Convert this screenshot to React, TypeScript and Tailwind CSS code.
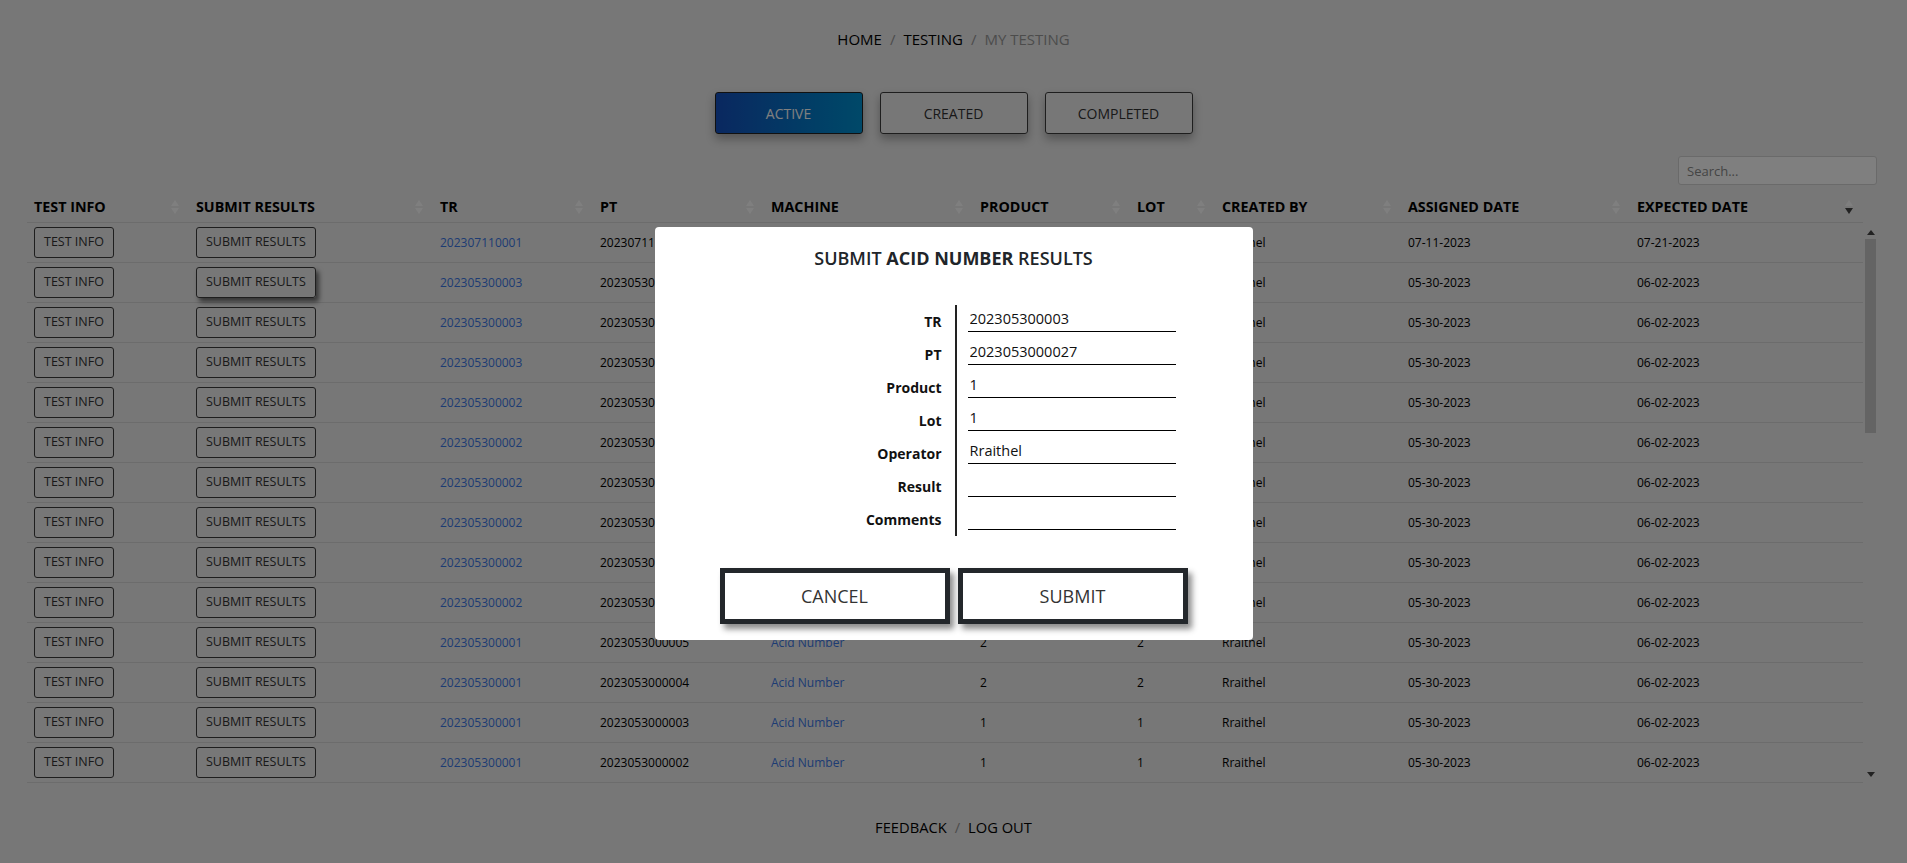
import React from 'react';

interface Column {
	label: string;
	width: string;
	sorted?: boolean;
}

interface TestRow {
	tr: string;
	pt: string;
	machine: string;
	product: string;
	lot: string;
	createdBy: string;
	assigned: string;
	expected: string;
}

const columns: Column[] = [
	{ label: 'TEST INFO', width: 'w-[162px]' },
	{ label: 'SUBMIT RESULTS', width: 'w-[244px]' },
	{ label: 'TR', width: 'w-[160px]' },
	{ label: 'PT', width: 'w-[171px]' },
	{ label: 'MACHINE', width: 'w-[209px]' },
	{ label: 'PRODUCT', width: 'w-[157px]' },
	{ label: 'LOT', width: 'w-[85px]' },
	{ label: 'CREATED BY', width: 'w-[186px]' },
	{ label: 'ASSIGNED DATE', width: 'w-[229px]' },
	{ label: 'EXPECTED DATE', width: 'w-[233px]', sorted: true },
];

const makeRow = (tr: string, pt: string, product: string, lot: string, assigned = '05-30-2023', expected = '06-02-2023'): TestRow => ({
	tr,
	pt,
	machine: 'Acid Number',
	product,
	lot,
	createdBy: 'Rraithel',
	assigned,
	expected,
});

const rows: TestRow[] = [
	makeRow('202307110001', '2023071100001', '1', '1', '07-11-2023', '07-21-2023'),
	makeRow('202305300003', '2023053000027', '1', '1'),
	makeRow('202305300003', '2023053000026', '1', '1'),
	makeRow('202305300003', '2023053000025', '1', '1'),
	makeRow('202305300002', '2023053000011', '2', '2'),
	makeRow('202305300002', '2023053000010', '2', '2'),
	makeRow('202305300002', '2023053000009', '2', '2'),
	makeRow('202305300002', '2023053000008', '2', '2'),
	makeRow('202305300002', '2023053000007', '2', '2'),
	makeRow('202305300002', '2023053000006', '2', '2'),
	makeRow('202305300001', '2023053000005', '2', '2'),
	makeRow('202305300001', '2023053000004', '2', '2'),
	makeRow('202305300001', '2023053000003', '1', '1'),
	makeRow('202305300001', '2023053000002', '1', '1'),
];

const formFields = [
	{ label: 'TR', value: '202305300003' },
	{ label: 'PT', value: '2023053000027' },
	{ label: 'Product', value: '1' },
	{ label: 'Lot', value: '1' },
	{ label: 'Operator', value: 'Rraithel' },
	{ label: 'Result', value: '' },
	{ label: 'Comments', value: '' },
];

function SortIcon({ sorted }: { sorted?: boolean }) {
	return (
		<svg width="8" height="14" viewBox="0 0 8 14" className="shrink-0">
			<path d="M4 0 L8 6 L0 6 Z" fill="#ffffff" />
			<path d="M0 8 L8 8 L4 14 Z" fill={sorted ? '#444444' : '#ffffff'} />
		</svg>
	);
}

function OutlineButton({ label, hovered }: { label: string; hovered?: boolean }) {
	return (
		<button
			className={`h-[31px] px-[9px] border border-[#3c3c3c] rounded-[3px] text-[12.5px] text-[#333] leading-none ${
				hovered ? 'shadow-[3px_4px_5px_rgba(0,0,0,0.55)]' : ''
			}`}>
			{label}
		</button>
	);
}

export default function App() {
	return (
		<div className="relative min-h-screen bg-[#eeeeee] font-['Open_Sans','Noto_Sans',sans-serif] text-black">
			<div className="flex flex-col items-center pt-[29px]">
				<nav className="flex items-center text-[15px] leading-[20px]">
					<span>HOME</span>
					<span className="px-[8px] text-[#999]">/</span>
					<span>TESTING</span>
					<span className="px-[8px] text-[#999]">/</span>
					<span className="text-[#999]">MY TESTING</span>
				</nav>

				<div className="mt-[43px] flex gap-[17px]">
					<button className="w-[148px] h-[42px] rounded-[3px] border border-[#222] bg-linear-to-r from-[#1450c0] to-[#0092d2] text-white text-[14px] shadow-[0_5px_10px_rgba(0,0,0,0.3)]">
						ACTIVE
					</button>
					<button className="w-[148px] h-[42px] rounded-[3px] border border-[#3c3c3c] text-[14px] text-[#333] shadow-[0_5px_10px_rgba(0,0,0,0.3)]">
						CREATED
					</button>
					<button className="w-[148px] h-[42px] rounded-[3px] border border-[#3c3c3c] text-[14px] text-[#333] shadow-[0_5px_10px_rgba(0,0,0,0.3)]">
						COMPLETED
					</button>
				</div>
			</div>

			<div className="ml-[27px] w-[1851px]">
				<div className="mt-[22px] flex justify-end pr-[1px]">
					<input
						placeholder="Search..."
						className="w-[199px] h-[29px] rounded-[3px] border border-[#d4d4d4] bg-white px-[8px] text-[13px] placeholder:text-[#8a8a8a] outline-none"
					/>
				</div>

				<div className="mt-[2px] flex w-[1836px] h-[36px] pt-[5px] border-b border-[#d8d8d8]">
					{columns.map((col) => (
						<div key={col.label} className={`${col.width} flex items-center justify-between pl-[7px] pr-[10px]`}>
							<span className="text-[14.3px] font-bold leading-[18px]">{col.label}</span>
							<SortIcon sorted={col.sorted} />
						</div>
					))}
				</div>

				<div className="flex">
					<div className="w-[1836px] h-[560px] overflow-hidden">
						{rows.map((row, i) => (
							<div key={i} className="flex h-[40px] items-center border-b border-[#d8d8d8] text-[12px]">
								<div className="w-[162px] pl-[7px]">
									<OutlineButton label="TEST INFO" />
								</div>
								<div className="w-[244px] pl-[7px]">
									<OutlineButton label="SUBMIT RESULTS" hovered={i === 1} />
								</div>
								<div className="w-[160px] pl-[7px] text-[#3b78e7]">{row.tr}</div>
								<div className="w-[171px] pl-[7px]">{row.pt}</div>
								<div className="w-[209px] pl-[7px] text-[#3b78e7]">{row.machine}</div>
								<div className="w-[157px] pl-[7px]">{row.product}</div>
								<div className="w-[85px] pl-[7px]">{row.lot}</div>
								<div className="w-[186px] pl-[7px]">{row.createdBy}</div>
								<div className="w-[229px] pl-[7px]">{row.assigned}</div>
								<div className="w-[233px] pl-[7px]">{row.expected}</div>
							</div>
						))}
					</div>

					<div className="w-[15px] h-[560px] flex flex-col items-center">
						<svg width="8" height="5" viewBox="0 0 8 5" className="mt-[7px]">
							<path d="M4 0 L8 5 L0 5 Z" fill="#444" />
						</svg>
						<div className="mt-[4px] w-[11px] h-[194px] bg-[#c8c8c8]" />
						<div className="flex-1" />
						<svg width="8" height="5" viewBox="0 0 8 5" className="mb-[6px]">
							<path d="M0 0 L8 0 L4 5 Z" fill="#444" />
						</svg>
					</div>
				</div>
			</div>

			<footer className="mt-[34px] flex justify-center text-[14.7px] leading-[20px] pb-[26px]">
				<span>FEEDBACK</span>
				<span className="px-[8px] text-[#999]">/</span>
				<span>LOG OUT</span>
			</footer>

			<div className="fixed inset-0 bg-black/50" />

			<div className="fixed inset-0 flex justify-center pt-[227px]">
				<div className="w-[598px] h-[413px] rounded-[4px] bg-white flex flex-col items-center pt-[19px]">
					<h2 className="text-[18px] leading-[24px] font-semibold text-[#212529]">
						SUBMIT <span className="font-bold">ACID NUMBER</span> RESULTS
					</h2>

					<div className="mt-[35px] flex w-full">
						<div className="w-[300px] pr-[13px] flex flex-col items-end">
							{formFields.map((f) => (
								<div key={f.label} className="h-[33px] pt-[7px] text-[14px] font-bold leading-[20px] text-[#111]">
									{f.label}
								</div>
							))}
						</div>
						<div className="border-l-2 border-[#222] pl-[11px]">
							{formFields.map((f) => (
								<div key={f.label} className="h-[33px]">
									<input
										defaultValue={f.value}
										className="w-[208px] h-[27px] border-b border-black px-[2px] text-[14.5px] text-[#111] outline-none"
									/>
								</div>
							))}
						</div>
					</div>

					<div className="mt-[32px] flex gap-[8px]">
						<button className="w-[230px] h-[56px] border-[5px] border-[#23272b] bg-white text-[18px] text-[#333] shadow-[4px_5px_6px_rgba(0,0,0,0.45)]">
							CANCEL
						</button>
						<button className="w-[230px] h-[56px] border-[5px] border-[#23272b] bg-white text-[18px] text-[#333] shadow-[4px_5px_6px_rgba(0,0,0,0.45)]">
							SUBMIT
						</button>
					</div>
				</div>
			</div>
		</div>
	);
}
